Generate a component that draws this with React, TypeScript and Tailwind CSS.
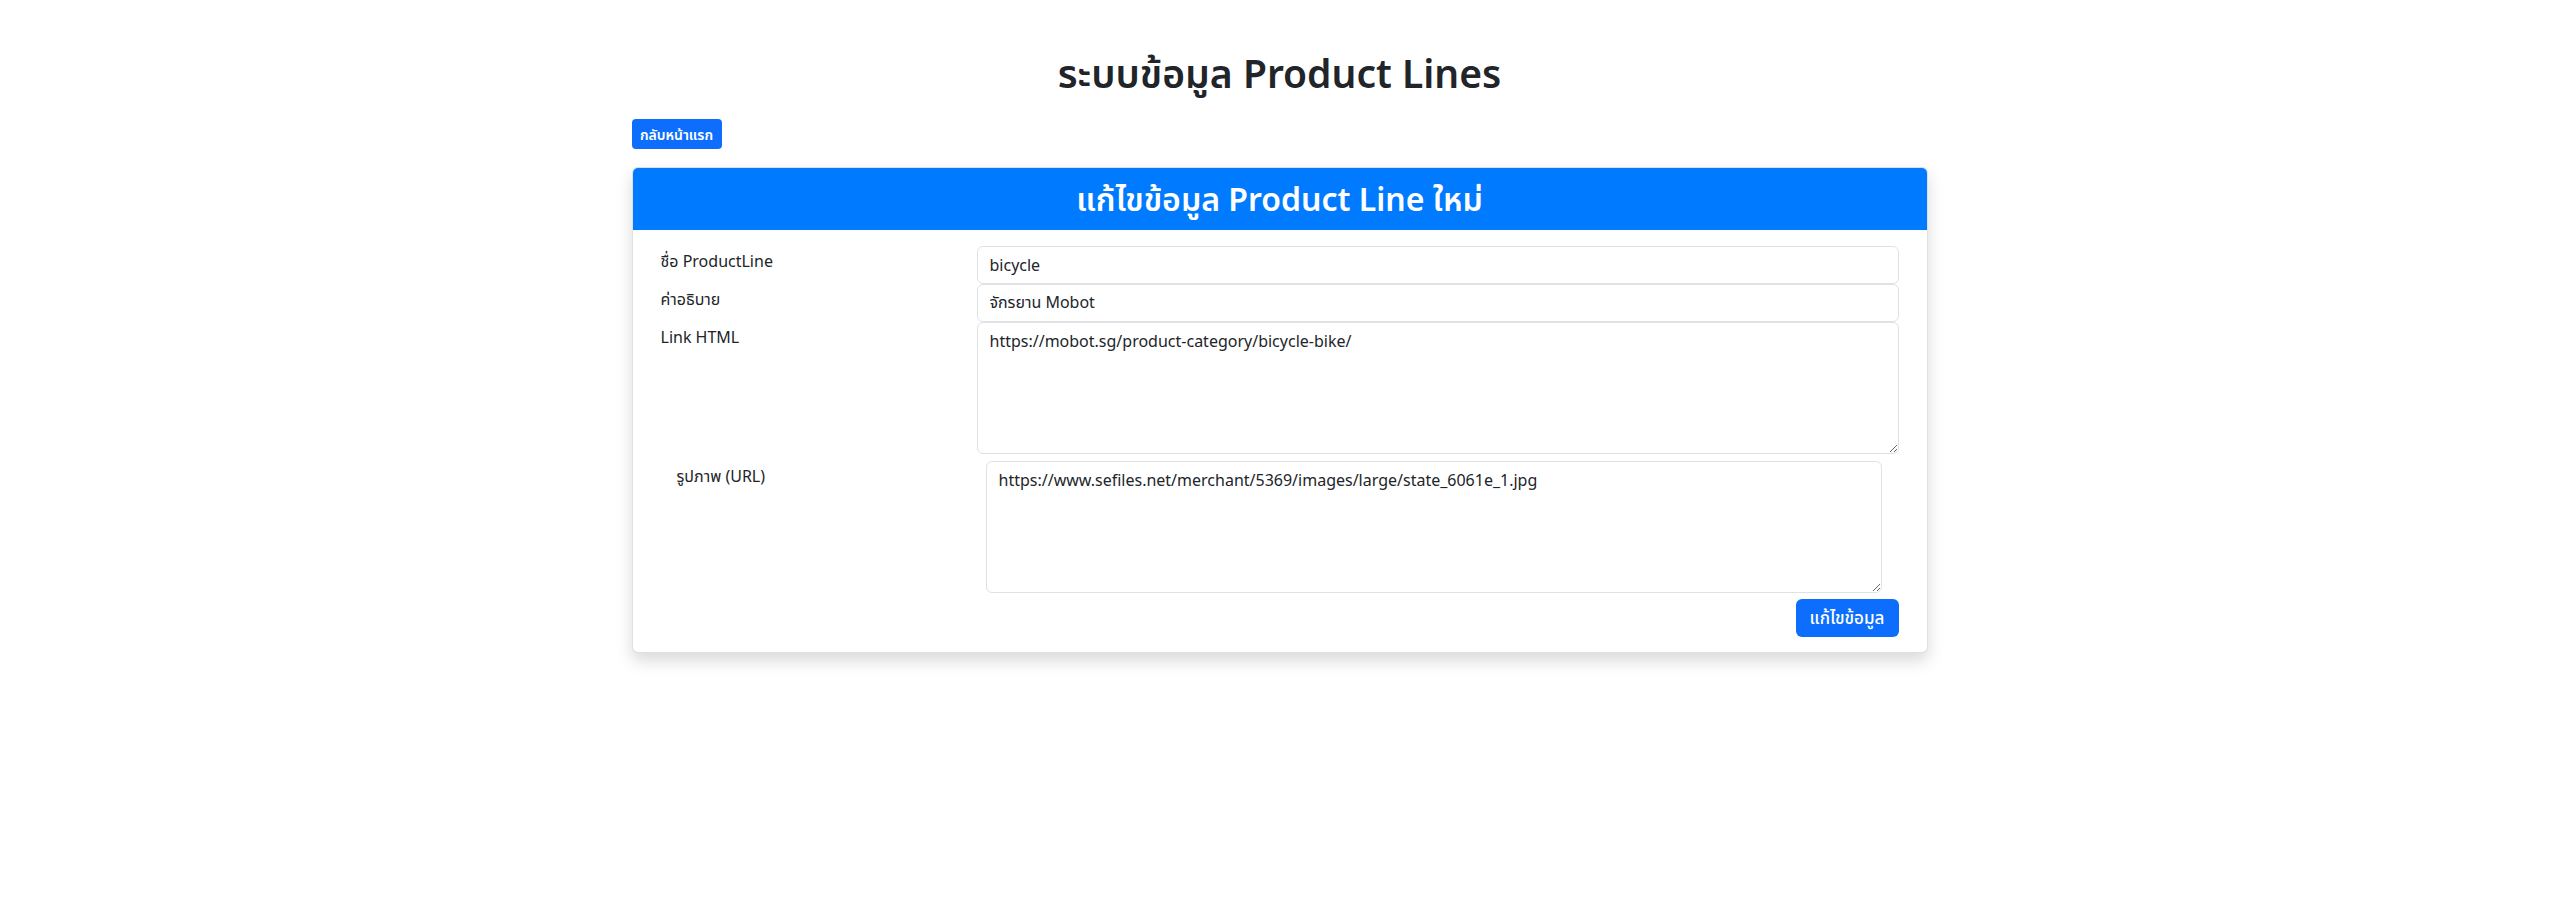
import React from 'react'

const font = { fontFamily: '"Noto Sans", "Noto Sans Thai", "Leelawadee UI", sans-serif' }

function Field({ label, children }: { label: string; children: React.ReactNode }) {
  return (
    <div className="flex">
      <label className="w-[316px] shrink-0 pt-[3px] text-[16px] leading-[24px] text-[#212529]">{label}</label>
      <div className="flex-1">{children}</div>
    </div>
  )
}

export default function App() {
  return (
    <div className="min-h-[914px] w-full bg-white text-[#212529]" style={font}>
      <div className="mx-auto w-[1296px] pt-[49px]">
        <h1 className="text-center text-[39px] font-semibold leading-[48px] text-[#212529]">
          ระบบข้อมูล Product Lines
        </h1>

        <div className="mt-[22px]">
          <button className="h-[30px] w-[90px] rounded-[4px] bg-[#0d6efd] text-[14px] font-semibold text-white">
            กลับหน้าแรก
          </button>
        </div>

        <div className="mt-[18px] overflow-hidden rounded-[6px] border border-black/[.125] bg-white shadow-[0_8px_16px_rgba(0,0,0,0.15)]">
          <div className="flex h-[62px] items-center justify-center bg-[#007bff]">
            <h3 className="text-[32px] font-semibold leading-[38px] text-white">แก้ไขข้อมูล Product Line ใหม่</h3>
          </div>

          <div className="px-[28px] pb-[15px] pt-[16px]">
            <Field label="ชื่อ ProductLine">
              <input
                readOnly
                defaultValue="bicycle"
                className="block h-[38px] w-full rounded-[6px] border border-[#dee2e6] bg-white px-[12px] text-[16px] text-[#212529] outline-none"
              />
            </Field>
            <Field label="ค่าอธิบาย">
              <input
                readOnly
                defaultValue="จักรยาน Mobot"
                className="block h-[38px] w-full rounded-[6px] border border-[#dee2e6] bg-white px-[12px] text-[16px] text-[#212529] outline-none"
              />
            </Field>
            <Field label="Link HTML">
              <textarea
                readOnly
                defaultValue="https://mobot.sg/product-category/bicycle-bike/"
                className="block h-[132px] w-full rounded-[6px] border border-[#dee2e6] bg-white px-[12px] py-[6px] text-[16px] leading-[24px] text-[#212529] outline-none"
              />
            </Field>

            <div className="mt-[7px] flex pl-[16px] pr-[17px]">
              <label className="w-[309px] shrink-0 pt-[3px] text-[16px] leading-[24px] text-[#212529]">รูปภาพ (URL)</label>
              <textarea
                readOnly
                defaultValue="https://www.sefiles.net/merchant/5369/images/large/state_6061e_1.jpg"
                className="block h-[132px] flex-1 rounded-[6px] border border-[#dee2e6] bg-white px-[12px] py-[6px] text-[16px] leading-[24px] text-[#212529] outline-none"
              />
            </div>

            <div className="mt-[6px] flex justify-end">
              <button className="h-[38px] w-[103px] rounded-[6px] bg-[#0d6efd] text-[17px] font-medium text-white">แก้ไขข้อมูล</button>
            </div>
          </div>
        </div>
      </div>
    </div>
  )
}
